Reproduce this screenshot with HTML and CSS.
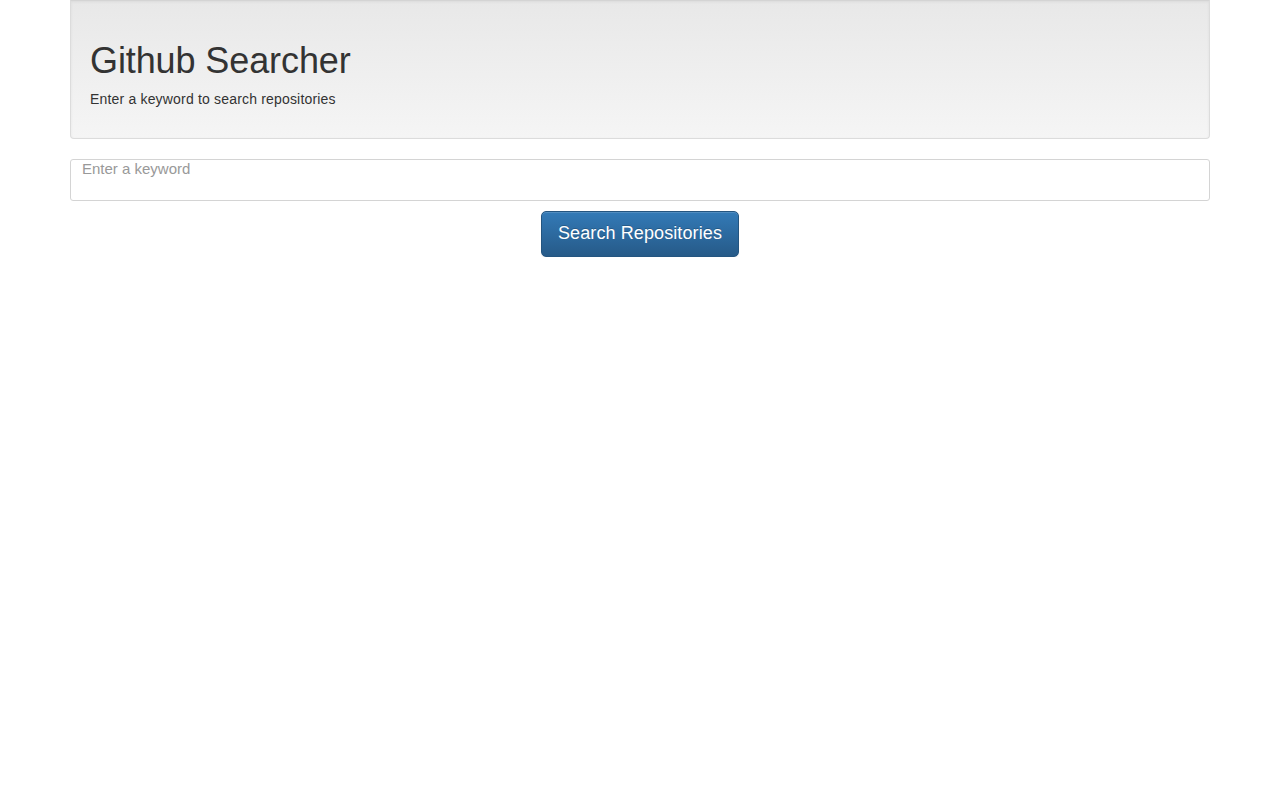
FILE: index.html
```html
<!DOCTYPE html>
<html>
<head>
<meta charset="utf-8">
<title>Github Searcher</title>
<link rel="stylesheet" href="styles.css">
</head>
<body>
<div class="container">
  <div class="jumbotron">
    <h1 class="title">Github Searcher</h1>
    <p class="lead">Enter a keyword to search repositories</p>
  </div>
  <textarea class="keyword" placeholder="Enter a keyword"></textarea>
  <div class="actions">
    <button class="btn-search" type="button">Search Repositories</button>
  </div>
</div>
</body>
</html>
```

FILE: styles.css
```css
* { box-sizing: border-box; }
html, body { margin: 0; padding: 0; background: #fff; }
body {
  font-family: "Liberation Sans", Arial, Helvetica, sans-serif;
  font-size: 14px;
  line-height: 20px;
  color: #333;
}
.container {
  width: 1140px;
  margin: 0 auto;
}
.jumbotron {
  border: 1px solid #dcdcdc;
  border-top-color: #d4d4d4;
  border-radius: 0 0 4px 4px;
  background: linear-gradient(to bottom, #e8e8e8 0%, #f5f5f5 100%);
  box-shadow: inset 0 1px 3px rgba(0,0,0,0.06), 0 1px 0 rgba(255,255,255,0.1);
  padding: 20px 19px 29px;
  margin-bottom: 20px;
}
.title {
  margin: 20px 0 8px;
  font-size: 36px;
  line-height: 1.1;
  font-weight: 400;
  color: #333;
  letter-spacing: -0.1px;
}
.lead {
  margin: 0;
  font-size: 14px;
  line-height: 20px;
  letter-spacing: 0.18px;
}
.keyword {
  display: block;
  width: 100%;
  height: 42px;
  border: 1px solid #d4d4d4;
  border-radius: 3px;
  padding: 0 11px;
  font-family: inherit;
  font-size: 15px;
  line-height: 18px;
  color: #555;
  resize: none;
  outline: none;
  background: #fff;
}
.keyword::placeholder { color: #999; }
.actions {
  display: flex;
  justify-content: center;
  margin-top: 10px;
}
.btn-search {
  width: 198px;
  height: 46px;
  padding: 0 16px;
  font-family: inherit;
  font-size: 18px;
  letter-spacing: 0.1px;
  color: #fff;
  background: linear-gradient(to bottom, #337ab7 0%, #265a88 100%);
  border: 1px solid #245580;
  border-radius: 5px;
  text-shadow: 0 -1px 0 rgba(0,0,0,0.2);
  box-shadow: inset 0 1px 0 rgba(255,255,255,0.15), 0 1px 1px rgba(0,0,0,0.075);
  cursor: pointer;
}
```
